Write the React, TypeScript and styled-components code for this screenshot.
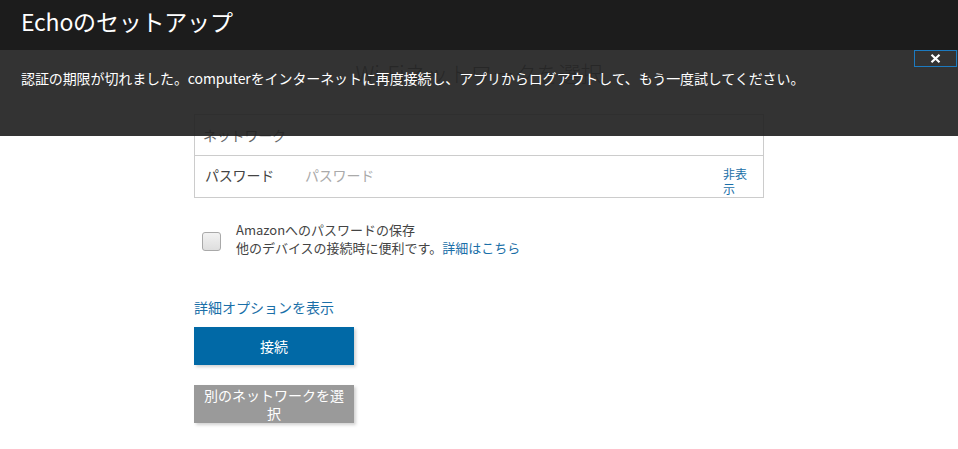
import * as React from "react";
import styled, { createGlobalStyle } from "styled-components";

const GlobalStyle = createGlobalStyle`
  html, body {
    margin: 0;
    padding: 0;
    background: #ffffff;
    font-family: "Noto Sans CJK JP", "Noto Sans", "Liberation Sans", sans-serif;
  }
`;

const Page = styled.div`
  position: relative;
  width: 958px;
  height: 449px;
  overflow: hidden;
  background: #ffffff;
`;

const Header = styled.header`
  height: 50px;
  background: #1c1c1c;
  display: flex;
  align-items: center;
  padding: 0 21px;
`;

const HeaderTitle = styled.h1`
  margin: 0;
  color: #ffffff;
  font-size: 23px;
  font-weight: 400;
  letter-spacing: -0.2px;
  margin-top: -9px;
`;

const Alert = styled.div`
  position: absolute;
  top: 50px;
  left: 0;
  right: 0;
  height: 86px;
  background: rgba(34, 34, 34, 0.92);
  display: flex;
  align-items: flex-start;
  padding: 18px 21px 0;
  box-sizing: border-box;
`;

const AlertText = styled.p`
  margin: 0;
  color: #ffffff;
  font-size: 14px;
  line-height: 20px;
  letter-spacing: -0.1px;
`;

const CloseButton = styled.button`
  position: absolute;
  top: 0;
  right: 1px;
  width: 43px;
  height: 17px;
  border: 1px solid #1c7ac0;
  background: transparent;
  padding: 0;
  display: flex;
  align-items: center;
  justify-content: center;
  cursor: pointer;
`;

const Content = styled.main`
  width: 570px;
  margin: 0 auto;
  display: flex;
  flex-direction: column;
`;

const PageTitle = styled.h2`
  margin: 0;
  height: 64px;
  padding-top: 10px;
  box-sizing: border-box;
  text-align: center;
  font-size: 22px;
  font-weight: 300;
  color: #666;
  line-height: 24px;
`;

const FieldBox = styled.div`
  border: 1px solid #cccccc;
  display: flex;
  flex-direction: column;
`;

const FieldRow = styled.div<{ $last?: boolean }>`
  height: ${(p) => (p.$last ? 42 : 40)}px;
  display: flex;
  align-items: ${(p) => (p.$last ? "flex-start" : "center")};
  padding: ${(p) => (p.$last ? "9px 0 0 10px" : "0 0 0 8px")};
  box-sizing: border-box;
  border-top: ${(p) => (p.$last ? "1px solid #cccccc" : "none")};
  font-size: 14px;
  line-height: 20px;
`;

const Placeholder = styled.span`
  color: #666;
  letter-spacing: -0.2px;
`;

const Label = styled.span`
  width: 100px;
  color: #444;
  letter-spacing: -0.2px;
`;

const PasswordInput = styled.span`
  flex: 1;
  color: #aaaaaa;
  letter-spacing: -0.2px;
`;

const ToggleLink = styled.a`
  width: 26px;
  margin-right: 14px;
  margin-top: 1px;
  font-size: 12px;
  line-height: 15px;
  color: #1a6fa8;
  word-break: break-all;
`;

const CheckRow = styled.div`
  display: flex;
  align-items: center;
  gap: 15px;
  margin: 23px 0 0 8px;
`;

const CheckBox = styled.span`
  width: 17px;
  height: 17px;
  border: 1px solid #a9a9a9;
  border-radius: 3px;
  background: linear-gradient(#f2f2f2, #dedede);
  flex-shrink: 0;
  margin-top: 4px;
`;

const CheckText = styled.div`
  font-size: 13px;
  line-height: 18px;
  color: #444;
  letter-spacing: 0;
`;

const InlineLink = styled.a`
  color: #1a6fa8;
`;

const OptionsLink = styled.a`
  margin-top: 40px;
  font-size: 14px;
  line-height: 20px;
  color: #1a6fa8;
  letter-spacing: 0;
`;

const ActionButton = styled.button<{ $variant: "primary" | "secondary" }>`
  width: 160px;
  height: 38px;
  margin-top: ${(p) => (p.$variant === "primary" ? 10 : 20)}px;
  border: none;
  padding: 0 6px;
  background: ${(p) => (p.$variant === "primary" ? "#0169a6" : "#9a9a9a")};
  color: #ffffff;
  font-family: inherit;
  font-size: 14px;
  line-height: 18px;
  letter-spacing: 0;
  box-shadow: 2px 2px 3px rgba(0, 0, 0, 0.18);
  cursor: pointer;
`;

export default function App() {
  return (
    <Page>
      <GlobalStyle />
      <Header>
        <HeaderTitle>Echoのセットアップ</HeaderTitle>
      </Header>

      <Content>
        <PageTitle>Wi-Fiネットワークを選択</PageTitle>
        <FieldBox>
          <FieldRow>
            <Placeholder>ネットワーク</Placeholder>
          </FieldRow>
          <FieldRow $last>
            <Label>パスワード</Label>
            <PasswordInput>パスワード</PasswordInput>
            <ToggleLink>非表示</ToggleLink>
          </FieldRow>
        </FieldBox>

        <CheckRow>
          <CheckBox />
          <CheckText>
            Amazonへのパスワードの保存
            <br />
            他のデバイスの接続時に便利です。<InlineLink>詳細はこちら</InlineLink>
          </CheckText>
        </CheckRow>

        <OptionsLink>詳細オプションを表示</OptionsLink>
        <ActionButton $variant="primary">接続</ActionButton>
        <ActionButton $variant="secondary">別のネットワークを選択</ActionButton>
      </Content>

      <Alert>
        <AlertText>
          認証の期限が切れました。computerをインターネットに再度接続し、アプリからログアウトして、もう一度試してください。
        </AlertText>
        <CloseButton aria-label="閉じる">
          <svg width="11" height="9" viewBox="0 0 11 9">
            <path d="M1.5 0.8 L9.5 8.2 M9.5 0.8 L1.5 8.2" stroke="#ffffff" strokeWidth="2.2" />
          </svg>
        </CloseButton>
      </Alert>
    </Page>
  );
}
